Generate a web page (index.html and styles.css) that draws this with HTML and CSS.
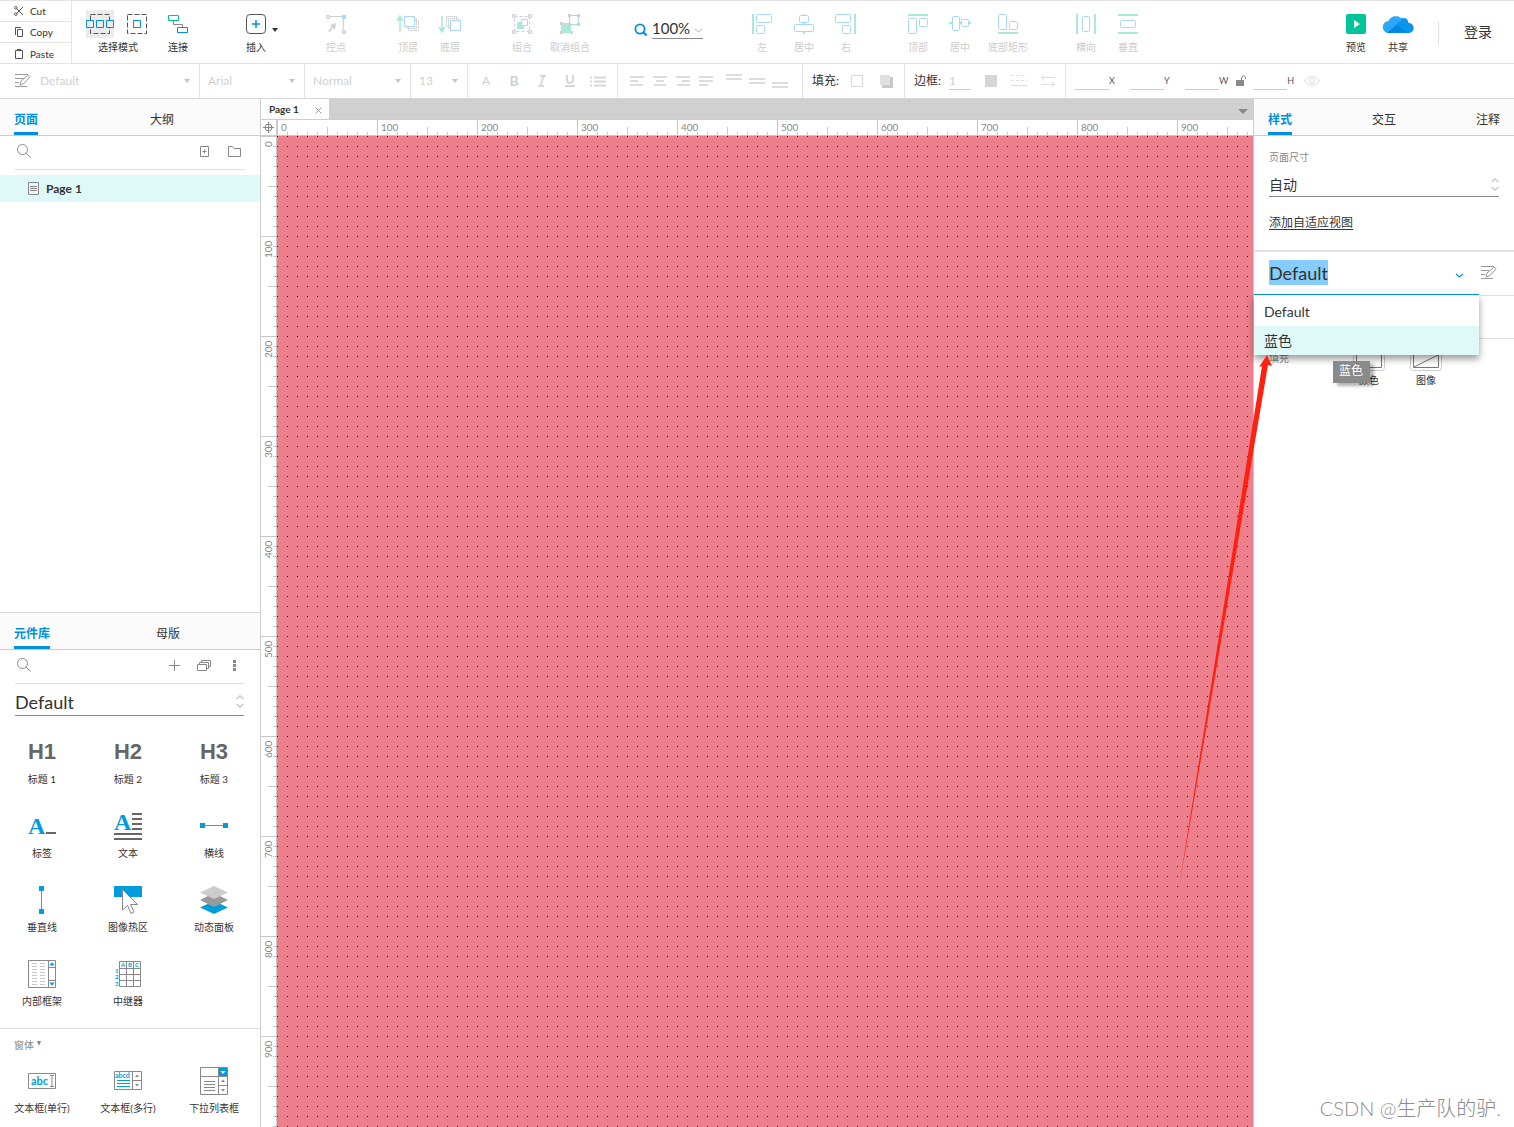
FILE: index.html
```html
<!DOCTYPE html>
<html lang="zh-CN">
<head>
<meta charset="utf-8">
<title>Page 1</title>
<link rel="stylesheet" href="styles.css">
</head>
<body>
<svg class="defs" aria-hidden="true">
  <symbol id="i-search" viewBox="0 0 14 14"><g fill="none" stroke="#8c8c8c"><circle cx="5.5" cy="5.5" r="5"/><path d="M9.2 9.2L13.6 13.6"/></g></symbol>
  <symbol id="i-style" viewBox="0 0 16 14"><g fill="none" stroke="currentColor"><path d="M0 .5h13M0 4.500h8M0 8.500h4M0 12.500h12"/><path d="M5 11l1-4 6.500-5.500q1.500-.6 2.500 1.200L9 9.500z"/></g></symbol>
  <symbol id="i-updown" viewBox="0 0 8 13"><path d="M.5 4L4 1l3.500 3M.5 9L4 12l3.500-3" fill="none" stroke="#c8c8c8" stroke-width="1.400"/></symbol>
</svg>

<header class="toolbar">
  <div class="clipboard">
    <button><svg width="10" height="10" viewBox="0 0 10 10"><g fill="none" stroke="#555"><path d="M2.500 2.500L9 9M2.500 7.500L9 1"/><circle cx="1.800" cy="1.800" r="1.300"/><circle cx="1.800" cy="8.200" r="1.300"/></g></svg>Cut</button>
    <button><svg width="10" height="10" viewBox="0 0 10 10"><path d="M3.500 2.500h5v7h-5zM1.500 8V.5H7" fill="none" stroke="#555"/></svg>Copy</button>
    <button><svg width="10" height="10" viewBox="0 0 10 10"><path d="M1.500 1.500h7v8h-7z" fill="none" stroke="#555"/><path d="M3 0h4v2H3z" fill="#555"/></svg>Paste</button>
  </div>
  <div class="tools main-tools">
    <div class="tool-set">
      <div class="select-mode">
        <div class="mode-icons">
          <button class="mode active" aria-label="选择模式"><svg width="28" height="28"><path d="M4.500 4.500h19v19h-19z" fill="none" stroke="#555" stroke-dasharray="5 2"/><path d="M.5 10.500h7v7h-7zM10.500 10.500h7v7h-7zM20.500 10.500h7v7h-7z" fill="#ececec" stroke="#008fe0"/></svg></button>
          <button class="mode" aria-label="包含模式"><svg width="28" height="28"><path d="M4.500 4.500h19v19h-19z" fill="none" stroke="#555" stroke-dasharray="5 2"/><path d="M10.500 10.500h7v7h-7z" fill="none" stroke="#008fe0"/></svg></button>
        </div>
        <span>选择模式</span>
      </div>
      <button class="tool"><svg width="20" height="20"><g fill="none"><path d="M5.500 6v4.500h9V13" stroke="#888"/><path d="M.5 1.500h10v5H.5z" stroke="#00c49a"/><path d="M9.500 13.500h10v5h-10z" stroke="#008fe0"/></g></svg><span>连接</span></button>
    </div>
    <div class="tool-set insert">
      <button class="tool"><svg width="20" height="20"><rect x=".5" y=".5" width="19" height="19" rx="3.500" fill="#fff" stroke="#555"/><path d="M10 6v8M6 10h8" stroke="#008fe0" stroke-width="1.500"/></svg><span>插入</span></button>
      <i class="caret dark"></i>
    </div>
    <div class="tool-set">
      <button class="tool off"><svg width="20" height="20"><path d="M3 2.500h14M17.500 3v14" stroke="#d0d0d0"/><path d="M.5 1.500h3v3h-3zM16.500 16.500h3v3h-3z" fill="#eee" stroke="#d0d0d0"/><path d="M16 1h4v4h-4z" fill="#a6d9f7"/><path d="M10 9l-1 7-2-2-3 4-2-1 4-4-2-2z" fill="#d0d0d0"/></svg><span>控点</span></button>
    </div>
    <div class="tool-set">
      <button class="tool off"><svg width="22" height="20"><path d="M3 18V3M.5 6L3 2l2.500 4z" fill="#a9ebd8" stroke="#a9ebd8" stroke-width="1.500"/><path d="M11.500 6.500h10v10h-10zM9.500 4.500h10v10h-10z" fill="#fff" stroke="#d8d8d8"/><path d="M7.500 2.500h10v10h-10z" fill="#fff" stroke="#a6d9f7"/></svg><span>顶层</span></button>
      <button class="tool off"><svg width="22" height="20"><path d="M3 2v15M.5 14L3 18l2.500-4z" fill="#a9ebd8" stroke="#a9ebd8" stroke-width="1.500"/><path d="M7.500 2.500h10v10h-10zM9.500 4.500h10v10h-10z" fill="#fff" stroke="#d8d8d8"/><path d="M11.500 6.500h10v10h-10z" fill="#fff" stroke="#a6d9f7"/></svg><span>底层</span></button>
    </div>
    <div class="tool-set">
      <button class="tool off"><svg width="20" height="20"><path d="M2.500 2.500h15v15h-15z" fill="none" stroke="#d0d0d0" stroke-dasharray="3 2"/><path d="M.5 .5h3v3h-3zM16.500 .5h3v3h-3zM.5 16.500h3v3h-3zM16.500 16.500h3v3h-3z" fill="#eee" stroke="#d0d0d0"/><path d="M5 8h7v7H5z" fill="#a9ebd8"/><path d="M9.500 5.500h6v6h-6z" fill="#fff" stroke="#a6d9f7"/></svg><span>组合</span></button>
      <button class="tool wide off"><svg width="20" height="20"><path d="M1 9h10v10H1z" fill="#a9ebd8"/><path d="M9.500 1.500h9v9h-9z" fill="#fff" stroke="#a6d9f7"/><path d="M8 0h3v3H8zM17 0h3v3h-3zM17 9h3v3h-3zM8 9h3v3H8zM0 8h3v3H0zM0 17h3v3H0zM10 17h3v3h-3z" fill="#d0d0d0"/></svg><span>取消组合</span></button>
    </div>
    <div class="zoom">
      <svg width="14" height="13"><circle cx="6" cy="6" r="4.600" fill="none" stroke="#008fe0" stroke-width="1.800"/><path d="M9.500 9.500l3.200 3" stroke="#008fe0" stroke-width="2.200"/></svg>
      <label><input type="text" value="100%" aria-label="缩放"><svg width="9" height="5"><path d="M1 1l3.500 3L8 1" fill="none" stroke="#ccc" stroke-width="1.300"/></svg></label>
    </div>
    <div class="tool-set">
      <button class="tool off"><svg width="22" height="20"><path d="M2 0v20" stroke="#a9ebd8" stroke-width="2"/><g fill="none" stroke="#a6d9f7"><rect x="5.500" y=".5" width="15" height="8" rx="1"/><rect x="5.500" y="11.500" width="8" height="8" rx="1"/></g></svg><span>左</span></button>
      <button class="tool off"><svg width="20" height="20"><path d="M10 0v20" stroke="#a9ebd8" stroke-width="2"/><g fill="#fff" stroke="#a6d9f7"><rect x="5.500" y="1.500" width="9" height="7" rx="1"/><rect x=".5" y="10.500" width="19" height="7" rx="1"/></g></svg><span>居中</span></button>
      <button class="tool off"><svg width="22" height="20"><path d="M20 0v20" stroke="#a9ebd8" stroke-width="2"/><g fill="none" stroke="#a6d9f7"><rect x=".5" y=".5" width="15" height="8" rx="1"/><rect x="7.500" y="11.500" width="8" height="8" rx="1"/></g></svg><span>右</span></button>
    </div>
    <div class="tool-set">
      <button class="tool off"><svg width="20" height="20"><path d="M0 1h20" stroke="#a9ebd8" stroke-width="2"/><g fill="none" stroke="#a6d9f7"><rect x=".5" y="4.500" width="8" height="15" rx="1"/><rect x="11.500" y="4.500" width="8" height="8" rx="1"/></g></svg><span>顶部</span></button>
      <button class="tool off"><svg width="22" height="20"><path d="M0 9h22" stroke="#a9ebd8" stroke-width="2"/><g fill="#fff" stroke="#a6d9f7"><rect x="3.500" y="2.500" width="7" height="14" rx="1"/><rect x="12.500" y="5.500" width="7" height="7" rx="1"/></g></svg><span>居中</span></button>
      <button class="tool wide off"><svg width="20" height="20"><path d="M0 19h20" stroke="#a9ebd8" stroke-width="2"/><g fill="none" stroke="#a6d9f7"><rect x=".5" y=".5" width="8" height="15" rx="1"/><rect x="11.500" y="7.500" width="8" height="8" rx="1"/></g></svg><span>底部矩形</span></button>
    </div>
    <div class="tool-set">
      <button class="tool off"><svg width="20" height="20"><path d="M1 0v20M19 0v20" stroke="#a9ebd8" stroke-width="2"/><rect x="6.500" y="2.500" width="7" height="15" rx="1" fill="none" stroke="#a6d9f7"/></svg><span>横向</span></button>
      <button class="tool off"><svg width="20" height="20"><path d="M0 1h20M0 19h20" stroke="#a9ebd8" stroke-width="2"/><rect x="2.500" y="6.500" width="15" height="7" rx="1" fill="none" stroke="#a6d9f7"/></svg><span>垂直</span></button>
    </div>
  </div>
  <div class="tools account">
    <button class="tool"><svg width="20" height="20"><rect width="20" height="20" rx="2" fill="#00c49a"/><path d="M8 6l6 4-6 4z" fill="#fff"/></svg><span>预览</span></button>
    <button class="tool"><svg width="30" height="20"><path d="M6 19a6 6 0 0 1-.5-12A8 8 0 0 1 18 4q7-1 7.500 5a5 5 0 0 1 0 10z" fill="#2aa9fa"/><path d="M4 19L17 7q3-4 7-1l1.500 3a5 5 0 0 1 0 10z" fill="#0a95ea"/><path d="M4 19l10-8 11 8z" fill="#0088dc"/></svg><span>共享</span></button>
    <a class="login" href="#">登录</a>
  </div>
</header>

<div class="format">
  <div class="cell f-style"><svg class="grey" width="16" height="14"><use href="#i-style"/></svg><select aria-label="样式" disabled><option>Default</option></select><i class="caret"></i></div>
  <div class="cell f-font"><select aria-label="字体" disabled><option>Arial</option></select><i class="caret"></i></div>
  <div class="cell f-weight"><select aria-label="字重" disabled><option>Normal</option></select><i class="caret"></i></div>
  <div class="cell f-size"><select aria-label="字号" disabled><option>13</option></select><i class="caret"></i></div>
  <div class="cell f-text">
    <button aria-label="颜色">A</button><button aria-label="粗体"><b>B</b></button><button aria-label="斜体"><svg width="10" height="12"><path d="M3 1h6M1 11h6M6.500 1l-3 10" stroke="#d8d8d8" stroke-width="2"/></svg></button><button aria-label="下划线"><svg width="10" height="12"><path d="M2 0v5a3 3 0 0 0 6 0V0M0 11h10" fill="none" stroke="#d8d8d8" stroke-width="2"/></svg></button><button aria-label="列表"><svg width="16" height="11"><path d="M0 1.500h2M0 5.500h2M0 9.500h2M4 1.500h12M4 5.500h12M4 9.500h12" stroke="#d8d8d8" stroke-width="2"/></svg></button>
  </div>
  <div class="cell f-align">
    <button aria-label="左对齐"><svg width="14" height="11"><path d="M0 1h14M0 5h8M0 9h13" stroke="#dcdcdc" stroke-width="2"/></svg></button><button aria-label="居中对齐"><svg width="14" height="11"><path d="M0 1h14M3 5h8M1 9h12" stroke="#dcdcdc" stroke-width="2"/></svg></button><button aria-label="右对齐"><svg width="14" height="11"><path d="M0 1h14M6 5h8M1 9h13" stroke="#dcdcdc" stroke-width="2"/></svg></button><button aria-label="两端对齐"><svg width="14" height="11"><path d="M0 1h14M0 5h14M0 9h9" stroke="#dcdcdc" stroke-width="2"/></svg></button>
    <button class="v" aria-label="顶对齐"><svg width="16" height="14"><path d="M0 1h16M0 5h16" stroke="#dcdcdc" stroke-width="2"/></svg></button><button class="v" aria-label="中对齐"><svg width="16" height="14"><path d="M0 5h16M0 9h16" stroke="#dcdcdc" stroke-width="2"/></svg></button><button class="v" aria-label="底对齐"><svg width="16" height="14"><path d="M0 9h16M0 13h16" stroke="#dcdcdc" stroke-width="2"/></svg></button>
  </div>
  <div class="cell f-fill"><span>填充:</span><button aria-label="填充颜色"><svg width="12" height="12"><path d="M.5 .5h11v11H.5z" fill="#fff" stroke="#d8d8d8"/></svg></button><button aria-label="阴影"><svg width="13" height="13"><path d="M2 2h11v11H2z" fill="#c8c8c8"/><path d="M0 0h10v10H0z" fill="#e0e0e0"/></svg></button></div>
  <div class="cell f-border"><label for="bw">边框:</label><input id="bw" type="text" value="1"><button aria-label="边框颜色"><svg width="12" height="12"><path d="M0 0h12v12H0z" fill="#d6d6d6"/></svg></button><button aria-label="线型"><svg width="16" height="12"><path d="M0 .5h16M0 5.500h16" stroke="#ddd" stroke-dasharray="3 2"/><path d="M0 10.500h16" stroke="#ddd"/></svg></button><button aria-label="箭头"><svg width="14" height="12"><path d="M14 2.500H1M3 0L.5 2.500 3 5M0 9.500h13M11 7l2.500 2.500L11 12" fill="none" stroke="#ddd"/></svg></button></div>
  <div class="cell f-pos">
    <label><input type="text">X</label><label><input type="text">Y</label><label><input type="text">W</label><svg class="lock" width="10" height="12"><path d="M0 5h8v6H0z" fill="#888"/><path d="M5.500 5V3a2 2 0 0 1 4 0v1" fill="none" stroke="#888"/></svg><label><input type="text">H</label><svg class="eye" width="16" height="10"><path d="M.5 5Q8-3.500 15.500 5 8 13.500.5 5z" fill="none" stroke="#ddd"/><circle cx="8" cy="5" r="2.300" fill="none" stroke="#ddd"/></svg>
  </div>
</div>

<main class="workspace">
  <aside class="left">
    <section class="pages">
      <nav class="tabs"><a class="on" href="#">页面</a><a href="#">大纲</a></nav>
      <div class="search-row"><svg width="14" height="14"><use href="#i-search"/></svg><div class="acts"><button aria-label="添加页面"><svg width="9" height="11"><path d="M.5 .5h8v10h-8zM2.500 5.500h4M4.500 3.500v4" fill="none" stroke="#888"/></svg></button><button aria-label="文件夹"><svg width="13" height="11"><path d="M.5 .5h4l1.500 2h6.500v8H.5z" fill="none" stroke="#888"/></svg></button></div></div>
      <a class="page-item" href="#"><svg width="11" height="13"><path d="M.5 .5h10v12H.5zM2 4.500h7M2 6.500h7M2 8.500h7" fill="none" stroke="#888"/></svg>Page 1</a>
    </section>
    <section class="library">
      <nav class="tabs"><a class="on" href="#">元件库</a><a href="#">母版</a></nav>
      <div class="search-row"><svg width="14" height="14"><use href="#i-search"/></svg><div class="acts"><button aria-label="添加"><svg width="11" height="11"><path d="M0 5.500h11M5.500 0v11" stroke="#888"/></svg></button><button aria-label="元件库"><svg width="14" height="11"><path d="M.5 4.500h9v6h-9zM2.500 4V2.500h9v6H10M4.500 2V.5h9v6H12" fill="none" stroke="#888"/></svg></button><button aria-label="更多"><svg width="3" height="11"><path d="M0 0h3v3H0zM0 4h3v3H0zM0 8h3v3H0z" fill="#888"/></svg></button></div></div>
      <div class="picker"><select aria-label="库"><option>Default</option></select><svg width="8" height="13"><use href="#i-updown"/></svg></div>
      <div class="widgets">
        <div class="widget"><b class="head">H1</b><span>标题 1</span></div>
        <div class="widget"><b class="head">H2</b><span>标题 2</span></div>
        <div class="widget"><b class="head">H3</b><span>标题 3</span></div>
        <div class="widget"><svg width="28" height="28"><text x="0" y="22" class="serif">A</text><path d="M18 21h10" stroke="#666" stroke-width="2"/></svg><span>标签</span></div>
        <div class="widget"><svg width="28" height="28"><text x="0" y="18" class="serif">A</text><path d="M18 2h10M18 7h10M18 12h10M18 17h10M0 22h28M0 27h28" stroke="#666" stroke-width="2"/></svg><span>文本</span></div>
        <div class="widget"><svg width="28" height="28"><path d="M3 13.500h22" stroke="#888"/><path d="M0 11h5v5H0zM23 11h5v5h-5z" fill="#009ddc"/></svg><span>横线</span></div>
        <div class="widget"><svg width="28" height="28"><path d="M13.500 3v22" stroke="#888"/><path d="M11 0h5v5h-5zM11 23h5v5h-5z" fill="#009ddc"/></svg><span>垂直线</span></div>
        <div class="widget"><svg width="28" height="28"><path d="M0 0h28v11H0z" fill="#009ddc"/><path d="M8.500 3.500V24l5-4.500 3.500 8 3-1.500-3.500-7.500h7z" fill="#fff" stroke="#888"/></svg><span>图像热区</span></div>
        <div class="widget"><svg width="28" height="28"><path d="M14 15l14 6.500L14 28 0 21.500z" fill="#009ddc"/><path d="M14 7l14 7-14 7-14-7z" fill="#999"/><path d="M14 0l14 6.500L14 13 0 6.500z" fill="#ccc"/></svg><span>动态面板</span></div>
        <div class="widget"><svg width="28" height="28"><path d="M.5 .5h27v27H.5zM20.500 .5v27M20.500 7.500h7M20.500 20.500h7" fill="none" stroke="#888"/><path d="M4 3.500h5M12 3.500h5M4 6.500h5M12 6.500h5M4 9.500h5M12 9.500h5M4 12.500h5M12 12.500h5M4 15.500h5M12 15.500h5M4 18.500h5M12 18.500h5M4 21.500h5M12 21.500h5M4 24.500h5M12 24.500h5" stroke="#c8c8c8"/><path d="M21.500 5.500L24 2l2.500 3.500zM21.500 22.500L24 26l2.500-3.500z" fill="#009ddc"/></svg><span>内部框架</span></div>
        <div class="widget"><svg width="28" height="28"><path d="M5.500 1.500h21v25h-21zM5.500 8.500h21M5.500 14.500h21M5.500 20.500h21M12.500 1.500v25M19.500 1.500v25" fill="none" stroke="#888"/><g class="tiny"><text x="7" y="7">A</text><text x="14" y="7">B</text><text x="21" y="7">C</text><text x="1" y="13">1</text><text x="1" y="19">2</text><text x="1" y="26">3</text></g></svg><span>中继器</span></div>
      </div>
      <h2 class="group">窗体 <i></i></h2>
      <div class="widgets forms">
        <div class="widget"><svg width="28" height="28"><path d="M.5 6.500h27v15H.5z" fill="#fff" stroke="#888"/><text x="3" y="18" class="abc">abc</text><path d="M22 8.500h4M24 8.500v11M22 19.500h4" stroke="#888"/></svg><span>文本框(单行)</span></div>
        <div class="widget"><svg width="28" height="28"><path d="M.5 4.500h27v18H.5zM18.500 4.500v18M18.500 13.500h9" fill="none" stroke="#888"/><text x="1" y="11" class="abcd">abcd</text><path d="M3 13.500h13M3 16.500h13M3 19.500h13" stroke="#009ddc"/><path d="M21 10l2-2.500 2 2.500zM21 17l2 2.500 2-2.500z" fill="#888"/></svg><span>文本框(多行)</span></div>
        <div class="widget"><svg width="28" height="28"><path d="M18 1h10v9H18z" fill="#009ddc"/><path d="M.5 .5h27v27H.5zM.5 9.500h27M18.500 .5v27M18.500 18.500h9M4 14.500h11M4 17.500h11M4 20.500h11M4 23.500h11" fill="none" stroke="#888"/><path d="M20.500 4h5L23 7z" fill="#fff"/><path d="M21 15l2-2.500 2 2.500zM21 22l2 2.500 2-2.500z" fill="#888"/></svg><span>下拉列表框</span></div>
      </div>
    </section>
  </aside>

  <section class="center">
    <div class="doc-tabs"><a class="doc-tab" href="#">Page 1 <svg width="7" height="7"><path d="M.5 .5l6 6M6.500 .5l-6 6" stroke="#999"/></svg></a><i class="caret big"></i></div>
    <div class="stage">
      <div class="origin"><svg width="11" height="11"><circle cx="5.500" cy="5.500" r="3.500" fill="none" stroke="#888"/><path d="M0 5.500h11M5.500 0v11" stroke="#888"/></svg></div>
      <div class="ruler-x">
        <svg width="100%" height="16"><defs><pattern id="rx" width="100" height="16" patternUnits="userSpaceOnUse"><path d="M.5 0v16M50.500 7v9M10.500 12v4M20.500 12v4M30.500 12v4M40.500 12v4M60.500 12v4M70.500 12v4M80.500 12v4M90.500 12v4" stroke="#c8c8c8"/></pattern></defs><rect width="100%" height="16" fill="url(#rx)"/></svg>
        <div class="nums"><span>0</span><span>100</span><span>200</span><span>300</span><span>400</span><span>500</span><span>600</span><span>700</span><span>800</span><span>900</span></div>
      </div>
      <div class="ruler-y">
        <svg width="16" height="100%"><defs><pattern id="ry" width="16" height="100" patternUnits="userSpaceOnUse"><path d="M0 .5h16M7 50.500h9M12 10.500h4M12 20.500h4M12 30.500h4M12 40.500h4M12 60.500h4M12 70.500h4M12 80.500h4M12 90.500h4" stroke="#c8c8c8"/></pattern></defs><rect width="16" height="100%" fill="url(#ry)"/></svg>
        <div class="nums"><span>0</span><span>100</span><span>200</span><span>300</span><span>400</span><span>500</span><span>600</span><span>700</span><span>800</span><span>900</span></div>
      </div>
      <div class="canvas"><svg width="100%" height="100%"><defs><pattern id="grid" width="10" height="10" patternUnits="userSpaceOnUse"><path d="M0 0h1v1H0z" fill="#0000e0"/></pattern></defs><rect width="100%" height="100%" fill="url(#grid)"/></svg></div>
    </div>
  </section>

  <aside class="right">
    <nav class="tabs"><a class="on" href="#">样式</a><a href="#">交互</a><a href="#">注释</a></nav>
    <div class="size">
      <label for="ps">页面尺寸</label>
      <div class="picker small"><select id="ps"><option>自动</option></select><svg width="8" height="13"><use href="#i-updown"/></svg></div>
      <a href="#">添加自适应视图</a>
    </div>
    <div class="style-row">
      <input type="text" value="Default" aria-label="页面样式">
      <svg class="chev" width="9" height="5"><path d="M1 1l3.500 3L8 1" fill="none" stroke="#008fe0" stroke-width="1.200"/></svg>
      <button class="grey" aria-label="管理样式"><svg width="16" height="14"><use href="#i-style"/></svg></button>
      <ul class="menu"><li>Default</li><li class="hover">蓝色</li></ul>
    </div>
    <div class="spacer"></div>
    <div class="fill-row"><span class="lbl">填充</span>
      <button class="swatch"><svg width="32" height="32"><rect x=".5" y=".5" width="31" height="31" rx="3" fill="#fff" stroke="#ccc"/><path d="M3.500 3.500h25v25h-25z" fill="none" stroke="#777"/></svg><span>颜色</span></button>
      <button class="swatch"><svg width="32" height="32"><rect x=".5" y=".5" width="31" height="31" rx="3" fill="#fff" stroke="#ccc"/><path d="M3.500 3.500h25v25h-25zM4 28L28 16" fill="none" stroke="#777"/></svg><span>图像</span></button>
    </div>
    <div class="tip" role="tooltip">蓝色</div>
    <svg class="arrow" width="100" height="550"><defs><linearGradient id="fade" x1="0" y1="1" x2="0" y2="0"><stop offset="0" stop-color="#ff2010" stop-opacity=".2"/><stop offset=".1" stop-color="#ff2010"/></linearGradient></defs><path d="M2 556L88 16 85 17 93 5 98 16 94 15z" fill="url(#fade)"/></svg>
    <p class="mark">CSDN @生产队的驴.</p>
  </aside>
</main>
</body>
</html>
```
FILE: styles.css
```css
* { box-sizing: border-box; }
body {
  margin: 0;
  height: 100vh;
  display: flex;
  flex-direction: column;
  overflow: hidden;
  background: #fff;
  color: #333;
  font-family: Lato, "Noto Sans CJK SC", sans-serif;
  font-size: 12px;
  line-height: 16px;
}
button { border: 0; padding: 0; background: none; color: inherit; font: inherit; }
input, select { border: 0; padding: 0; margin: 0; background: none; color: inherit; font: inherit; appearance: none; border-radius: 0; opacity: 1; }
a { color: inherit; text-decoration: none; }
svg { flex: none; display: block; overflow: visible; }
.defs { position: absolute; width: 0; height: 0; }
.grey { color: #999; }

.caret { width: 0; height: 0; border: 3px solid transparent; border-top: 4px solid #c4c4c4; border-bottom: 0; }
.caret.dark { border-top-color: #333; }
.caret.big { border-width: 5px 5px 0; border-top-color: #888; }

/* main toolbar */
.toolbar { flex: none; display: flex; height: 64px; border-top: 1px solid #e4e4e4; border-bottom: 1px solid #e4e4e4; }
.clipboard { flex: none; width: 72px; display: grid; grid-template-rows: repeat(3, 21px); border-right: 1px solid #e4e4e4; }
.clipboard button { display: flex; align-items: center; gap: 6px; padding-left: 14px; font-size: 10px; line-height: 14px; border-bottom: 1px solid #e4e4e4; }
.clipboard button:last-child { border-bottom: 0; }
.tools { display: flex; font-size: 10px; line-height: 14px; }
.main-tools { gap: 30px; padding-left: 8px; }
.tool-set { display: flex; position: relative; }
.tool { width: 42px; padding-top: 13px; display: flex; flex-direction: column; align-items: center; gap: 6px; white-space: nowrap; }
.tool.wide { width: 54px; }
.off { color: #ccc; }
.select-mode { width: 76px; margin-right: 1px; padding-top: 9px; display: flex; flex-direction: column; align-items: center; gap: 2px; }
.mode-icons { display: flex; gap: 9px; }
.mode.active { background: #ececec; }
.insert { margin: 0 8px 0 6px; }
.insert .caret { position: absolute; left: 37px; top: 27px; }
.zoom { width: 72px; margin: 16px 5px 0 7px; display: flex; gap: 4px; align-items: flex-start; }
.zoom > svg { margin-top: 6px; }
.zoom label { width: 51px; height: 22px; display: flex; align-items: center; justify-content: space-between; border-bottom: 1px solid #888; }
.zoom label svg { margin-top: 6px; }
.zoom input { width: 40px; font-size: 15px; line-height: 18px; }
.account { margin-left: auto; padding-right: 22px; }
.login { margin: 20px 0 0 19px; height: 24px; padding-left: 25px; border-left: 1px solid #e0e0e0; font-size: 14px; line-height: 22px; }

/* format bar */
.format { flex: none; display: flex; height: 35px; border-bottom: 1px solid #d6d6d6; color: #d0d0d0; }
.cell { flex: none; display: flex; align-items: center; border-right: 1px solid #e4e4e4; padding: 0 9px 0 8px; }
.cell select { flex: 1; min-width: 0; height: 16px; }
.f-style { width: 200px; padding-left: 15px; gap: 9px; }
.f-font { width: 105px; }
.f-weight { width: 106px; }
.f-size { width: 57px; }
.f-text { width: 150px; padding: 0 4px; }
.f-text button { width: 28px; display: flex; justify-content: center; }
.f-text b { font-size: 14px; }
.f-align { width: 185px; padding: 0 10px 0 12px; gap: 9px; }
.f-align .v { margin-right: -2px; }
.f-align .v:nth-child(5) { margin-left: 4px; }
.f-fill { width: 102px; padding-left: 9px; gap: 12px; color: #333; }
.f-fill button + button { margin-left: 5px; }
.f-border { width: 161px; padding-left: 9px; gap: 14px; }
.f-border label { color: #333; margin-right: -6px; }
.f-border input { width: 22px; height: 18px; border-bottom: 1px solid #ccc; }
.f-pos { border: 0; padding-left: 9px; gap: 14px; color: #555; font-size: 9px; }
.f-pos label { display: flex; align-items: center; min-width: 41px; }
.f-pos input { width: 34px; height: 18px; border-bottom: 1px solid #ccc; }
.f-pos .lock { margin: 0 -7px 0 -6px; }
.f-pos .eye { margin-left: -4px; }

/* workspace */
.workspace { flex: 1; min-height: 0; display: grid; grid-template-columns: 261px minmax(0, 1fr) 261px; }
.left { display: flex; flex-direction: column; min-height: 0; border-right: 1px solid #ccc; }
.pages { flex: 1; min-height: 0; }
.library { flex: none; border-top: 1px solid #d4d4d4; }
.tabs { display: flex; justify-content: space-between; height: 37px; padding: 0 14px; background: #fbfbfb; border-bottom: 1px solid #ccc; }
.tabs a { height: 36px; padding-top: 13px; border-bottom: 3px solid transparent; }
.tabs .on { color: #008fe0; font-weight: 700; border-color: #008fe0; }
.left .tabs a:last-child { margin-right: 72px; }
.library .tabs a:last-child { margin-right: 66px; }
.search-row { display: flex; justify-content: space-between; align-items: center; height: 34px; margin: 0 15px; padding: 0 0 3px 2px; border-bottom: 1px solid #e0e0e0; }
.acts { display: flex; }
.acts button { width: 30px; display: flex; justify-content: center; }
.acts button:last-child { width: 21px; margin: 0 0 0 5px; }
.page-item { display: flex; align-items: center; gap: 7px; height: 27px; margin-top: 5px; padding-left: 28px; background: #dff9f9; font-weight: 700; }
.picker { display: flex; align-items: center; justify-content: space-between; height: 32px; margin: 0 16px 0 15px; padding-top: 4px; border-bottom: 1px solid #888; }
.picker select { flex: 1; height: 26px; font-size: 18px; }
.widgets { display: grid; grid-template-columns: repeat(3, 86px); grid-auto-rows: 74px; padding-top: 22px; }
.widget { display: flex; flex-direction: column; align-items: center; gap: 6px; padding-right: 2px; font-size: 10px; line-height: 14px; white-space: nowrap; }
.head { height: 28px; font: 700 22px/28px "Liberation Sans", Arial, sans-serif; color: #666; }
.serif { font: 700 24px "Liberation Serif", serif; fill: #009ddc; }
.abc { font: 700 11px Lato, sans-serif; fill: #009ddc; }
.abcd { font: 700 7px Lato, sans-serif; fill: #009ddc; }
.tiny { font: 700 6px Lato, sans-serif; fill: #009ddc; }
.group { display: flex; align-items: center; gap: 3px; margin: -6px 0 0; padding: 9px 14px 0; border-top: 1px solid #e0e0e0; color: #888; font-size: 10px; line-height: 14px; font-weight: 400; }
.group i { margin-bottom: 3px; border: 2px solid transparent; border-top: 5px solid #888; border-bottom: 0; }
.forms { padding-top: 15px; grid-auto-rows: 60px; }

/* page canvas */
.center { display: flex; flex-direction: column; min-width: 0; min-height: 0; }
.doc-tabs { flex: none; display: flex; justify-content: space-between; height: 21px; padding-right: 5px; background: #d0d0d0; border-bottom: 1px solid #ccc; }
.doc-tabs .big { margin-top: 10px; }
.doc-tab { display: flex; align-items: center; justify-content: space-between; height: 20px; width: 68px; padding: 0 7px 0 8px; background: #fff; font-size: 10px; font-weight: 700; white-space: nowrap; }
.doc-tab svg { margin-top: 2px; }
.stage { flex: 1; min-height: 0; display: grid; grid-template: 16px minmax(0, 1fr) / 16px minmax(0, 1fr); }
.origin { display: grid; place-items: center; border-right: 1px solid #ccc; border-bottom: 1px solid #ccc; }
.ruler-x, .ruler-y { overflow: hidden; position: relative; color: #888; font-size: 10px; line-height: 14px; }
.ruler-x { border-bottom: 1px solid #c8c8c8; }
.ruler-y { border-right: 1px solid #c8c8c8; }
.nums { position: absolute; top: 0; left: 0; display: flex; }
.nums span { flex: none; width: 100px; padding-left: 4px; }
.ruler-y .nums { flex-direction: column; }
.ruler-y .nums span { width: 15px; height: 100px; padding: 0 0 5px; writing-mode: vertical-rl; transform: rotate(180deg); text-align: end; }
.canvas { background: #ed808c; }

/* inspector */
.right { position: relative; border-left: 1px solid #ccc; min-height: 0; }
.size { padding: 13px 15px 19px; border-bottom: 2px solid #e4e4e4; }
.size label { display: block; color: #888; font-size: 10px; }
.picker.small { height: 32px; margin: 0 0 18px; padding-top: 8px; }
.picker.small select { font-size: 14px; height: 22px; }
.size > a { text-decoration: underline; text-underline-offset: 2px; }
.style-row { position: relative; display: flex; align-items: center; height: 44px; padding: 0 17px 2px 15px; border-bottom: 1px solid #e0e0e0; }
.style-row input { width: 59px; height: 25px; background: #86cdfb; font-size: 18px; }
.chev { margin: 6px 17px 0 auto; }
.menu { position: absolute; z-index: 2; top: 42px; left: 0; width: 225px; margin: 0; padding: 2px 0 0; list-style: none; background: #fff; border-top: 1px solid #008fe0; box-shadow: 0 4px 7px rgba(0, 0, 0, .4); font-size: 14px; }
.menu li { height: 29px; padding: 0 10px; line-height: 29px; }
.menu .hover { background: #dff9f9; }
.spacer { height: 43px; border-bottom: 1px solid #e0e0e0; }
.fill-row { display: flex; padding-left: 15px; font-size: 10px; line-height: 14px; }
.lbl { width: 84px; padding-top: 12px; color: #888; }
.swatch { display: flex; flex-direction: column; align-items: center; gap: 2px; margin-right: 25px; }
.tip { position: absolute; z-index: 3; top: 262px; left: 79px; padding: 2px 7px 4px 6px; background: #8a8a8a; color: #fff; box-shadow: 4px 3px 3px rgba(0, 0, 0, .3); }
.arrow { position: absolute; z-index: 4; top: 251px; left: -80px; }
.mark { position: absolute; right: 13px; bottom: 5px; margin: 0; color: #8c8c8c; font: 300 20px/28px Lato, "Noto Sans CJK SC", sans-serif; white-space: nowrap; }
```
